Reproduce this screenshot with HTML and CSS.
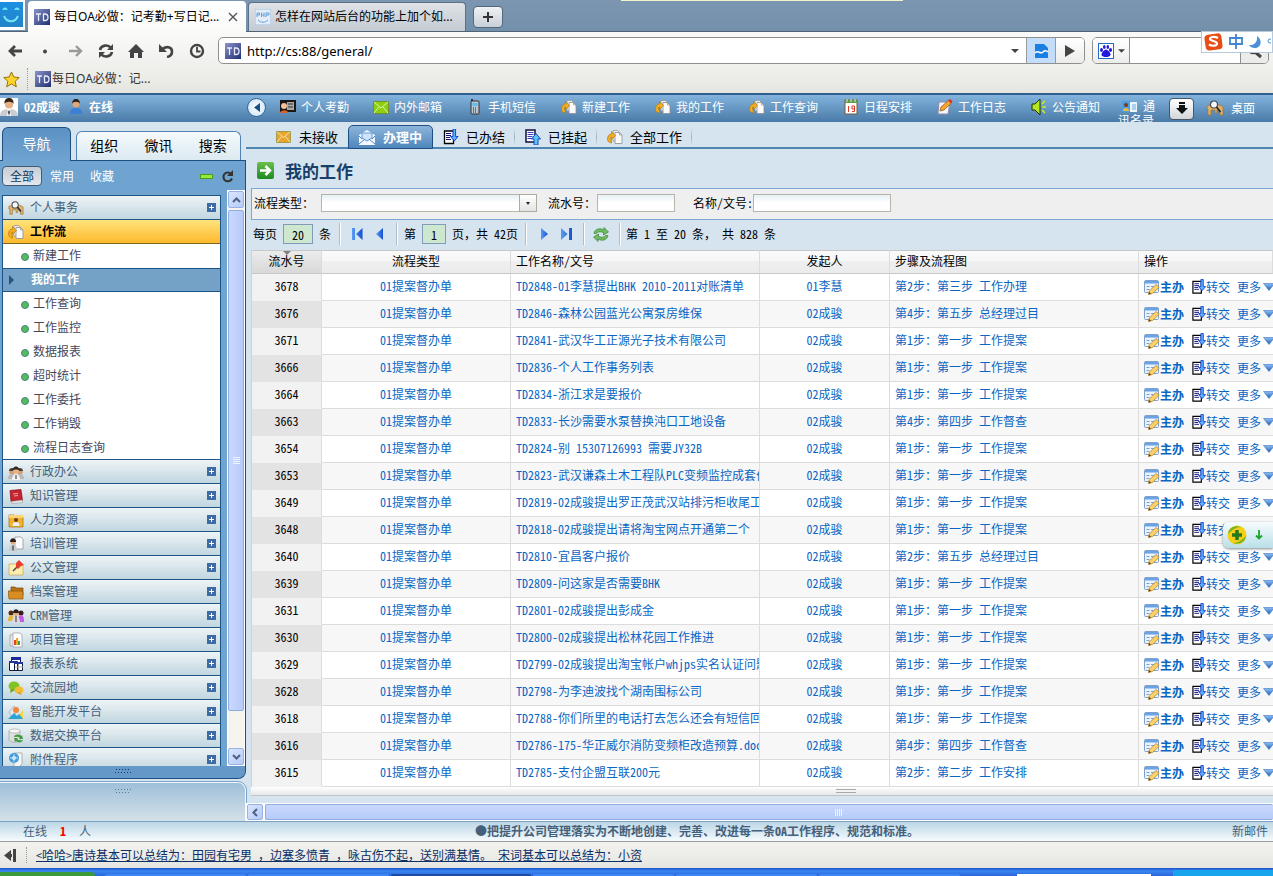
FILE: index.html
```html
<!DOCTYPE html>
<html lang="zh-CN">
<head>
<meta charset="utf-8">
<title>每日OA必做：记考勤+写日记</title>
<link rel="stylesheet" href="styles.css">
</head>
<body>
<svg class="defs" aria-hidden="true">
  <defs>
    <linearGradient id="gb" x1="0" x2="1"><stop offset="0" stop-color="#5b9cf5"/><stop offset="1" stop-color="#1550d0"/></linearGradient>
    <linearGradient id="gtri" x1="0" y1="0" x2="0" y2="1"><stop offset="0" stop-color="#8fc0f5"/><stop offset="1" stop-color="#1c5cb8"/></linearGradient>
    <linearGradient id="gtd" x1="0" y1="0" x2="1" y2="1"><stop offset="0" stop-color="#8b93c8"/><stop offset="1" stop-color="#1f2f72"/></linearGradient>
    <linearGradient id="ggreen" x1="0" y1="0" x2="0" y2="1"><stop offset="0" stop-color="#6cc04a"/><stop offset="1" stop-color="#1d8a22"/></linearGradient>
    <symbol id="i-form" viewBox="0 0 16 16"><rect x=".5" y="1.500" width="14" height="12" rx="1" fill="#eaf3fc" stroke="#7fa0c8"/><path d="M1 2h13v2.500H1z" fill="#6aa2e6"/><path d="M2.500 7.500h3M7 7.500h4M2.500 10.500h3" stroke="#7f9fc8"/><path d="M4.500 15.500l.7-3.500L12 5.500l3.200 2.700L8.500 14.500z" fill="#fbd16a" stroke="#b8862e" stroke-width=".8"/><path d="M4.500 15.500l.6-2.500 2 1.800z" fill="#5c3c14"/></symbol>
    <symbol id="i-turn" viewBox="0 0 15 16"><path d="M1 2h9v12.500H1z" fill="#fff" stroke="#000" stroke-width="1.300"/><path d="M2.500 4.500h5M2.500 6.500h5M2.500 8.500h4M2.500 10.500h5" stroke="#10107c"/><path d="M9.500 0h2.600v7.500h2.500L10.800 12 7 7.500h2.500z" fill="#58b4ff" stroke="#1238d0" stroke-width=".9"/></symbol>
    <symbol id="i-up" viewBox="0 0 16 16"><path d="M1 1h9v12H1z" fill="#fff" stroke="#101040" stroke-width="1.500"/><path d="M2.500 3.500h6M2.500 5.500h6M2.500 7.500h5M2.500 9.500h5" stroke="#3e3ec0"/><path d="M9 16h4v-6h2.500L11 4.500 6.500 10H9z" fill="#58c4ff" stroke="#1238b0" stroke-width=".9"/></symbol>
    <symbol id="i-tri" viewBox="0 0 12 8"><path d="M.5.5h11L6 7.500z" fill="url(#gtri)" stroke="#3d74c0" stroke-width=".6"/></symbol>
    <symbol id="i-flow" viewBox="0 0 16 16"><path d="M6 1.500h4.500l2 2V12H6z" fill="#eee" stroke="#999" stroke-width=".8"/><path d="M8 3.500h4.500l2.500 2.500v8.500H8z" fill="#fafafa" stroke="#8d8d8d" stroke-width=".8"/><path d="M12.500 3.500V6H15" fill="none" stroke="#8d8d8d" stroke-width=".7"/><path d="M.5 10.500C.5 7 2 5 4.500 5V2.500l4 4-4 4V8C3 8 3 10 4.500 12v2C2 13.500.5 12.500.5 10.500z" fill="#f2ae22" stroke="#b67a0c" stroke-width=".7"/></symbol>
    <symbol id="i-desk" viewBox="0 0 18 16"><path d="M1 6l4-1h9l3 2v8h-3v-5h-3v3H9v-3H5v5H2V9H1z" fill="#deb36c" stroke="#9e7130" stroke-width=".7"/><circle cx="8" cy="4.500" r="3.500" fill="#f7fbff" stroke="#4c4c50" stroke-width="1.200"/><path d="M10.500 7l4 5" stroke="#2c2c2c" stroke-width="1.800"/></symbol>
    <symbol id="i-person" viewBox="0 0 18 18"><path d="M0 18c0-5 3-7 9-7s9 2 9 7z" fill="#c9cdd2"/><path d="M7 11h4l-1 2 1 5H7l1-5z" fill="#fff"/><path d="M9 12l1 2-1 4-1-4z" fill="#333"/><circle cx="9" cy="6.500" r="4" fill="#e5b184"/><path d="M4.500 6C4 1 7 0 9 0s5 1 4.500 6c-1-3-8-3-9 0z" fill="#332417"/></symbol>
    <symbol id="i-bluep" viewBox="0 0 14 16"><path d="M1 15c0-4 2-6 6-6s6 2 6 6z" fill="#3b7fd6"/><circle cx="7" cy="5" r="3.500" fill="#dfa777"/><path d="M3 5c0-7 8-7 8 0-1-3-7-3-8 0z" fill="#292018"/></symbol>
    <symbol id="i-team" viewBox="0 0 16 16"><circle cx="4" cy="8" r="2.800" fill="#d29e72"/><circle cx="12" cy="8" r="2.800" fill="#d29e72"/><path d="M0 15c0-4 2-5 4-5s4 1 4 5zM8 15c0-4 2-5 4-5s4 1 4 5z" fill="#bababa"/><path d="M1 7c0-4 6-4 6 0zM9 7c0-4 6-4 6 0z" fill="#4a3e36"/><path d="M4 16c0-4 2-6 4-6s4 2 4 6z" fill="#f1f1f1"/><circle cx="8" cy="7" r="3" fill="#e8b586"/><path d="M4.500 7c0-6 7-6 7 0-1-2-6-2-7 0z" fill="#2d251f"/><path d="M8 11v4" stroke="#333"/></symbol>
    <symbol id="i-book" viewBox="0 0 16 16"><path d="M2 2.500l11-1 1.500 11-11.500 1z" fill="#c52430" stroke="#7f1018" stroke-width=".7"/><path d="M3 13.500L14.500 12v2.500L4 15.500z" fill="#eee" stroke="#888" stroke-width=".5"/><path d="M5 6l5-.5M6 8l4-.5" stroke="#f3a1a1"/></symbol>
    <symbol id="i-hr" viewBox="0 0 16 16"><path d="M1 3h5l1 2h8v10H1z" fill="#f3b22e" stroke="#a56f0a" stroke-width=".7"/><path d="M1 3h14v3H1z" fill="#fbd574"/><circle cx="8" cy="8" r="2" fill="#6b3c18"/><path d="M4.500 14c0-3 1-4 3.500-4s3.500 1 3.500 4z" fill="#eee"/></symbol>
    <symbol id="i-train" viewBox="0 0 16 16"><path d="M7 1h6l2 2v10H7z" fill="#fbfbfb" stroke="#8b8b8b" stroke-width=".7"/><circle cx="5" cy="6" r="2.500" fill="#e1ad80"/><path d="M2 6c0-5 6-5 6 0z" fill="#2c211a"/><path d="M1 15c0-5 1-6 4-6s4 1 4 6z" fill="#c9cbcf"/><path d="M5 9.500v5" stroke="#222"/></symbol>
    <symbol id="i-pin" viewBox="0 0 16 16"><path d="M1 4h14v11H1z" fill="#fdeeae" stroke="#c6a65a" stroke-width=".7"/><path d="M5 11l4-4" stroke="#444" stroke-width="1.500"/><path d="M8 3l3-3 5 5-3 1-3 3-2-2z" fill="#e7402c"/></symbol>
    <symbol id="i-box" viewBox="0 0 16 16"><path d="M3 3h4l1 1h7v7H3z" fill="#b87416" stroke="#774606" stroke-width=".7"/><path d="M0 7h14l1 2v6H1z" fill="#d98c22" stroke="#8b530a" stroke-width=".7"/></symbol>
    <symbol id="i-crm" viewBox="0 0 16 16"><circle cx="3" cy="5" r="2.500" fill="#4c2c18"/><circle cx="13" cy="5" r="2.500" fill="#3a1c1c"/><path d="M0 13c0-5 2-6 3-6s3 1 3 6z" fill="#eab53b"/><path d="M10 14c0-5 1-7 3-7s3 2 3 7z" fill="#c35ae0"/><circle cx="8" cy="5" r="3" fill="#e0ad82"/><path d="M5 5c0-5 6-5 6 0z" fill="#272020"/><path d="M4 15c0-5 2-7 4-7s4 2 4 7z" fill="#d9dce2"/><path d="M8 8v6" stroke="#333"/></symbol>
    <symbol id="i-proj" viewBox="0 0 16 16"><path d="M2 3h8v11H2z" fill="#e8e8e8" stroke="#999" stroke-width=".7"/><path d="M5 1h7l2 2v12H5z" fill="#fff" stroke="#999" stroke-width=".7"/><path d="M6 8h2v5H6z" fill="#e1482a"/><path d="M8 6h2v7H8z" fill="#f6a623"/><path d="M10 9h2v4h-2z" fill="#3ba244"/></symbol>
    <symbol id="i-report" viewBox="0 0 16 16"><path d="M3.500 1.500h9v9h-9z" fill="#fff" stroke="#111a60"/><path d="M3 1h10v3H3z" fill="#1a2a9c"/><path d="M1.500 5.500h8v9h-8zM6.500 6.500h8v8h-8z" fill="#fff" stroke="#111a40"/><path d="M6 6h9v2H6zM1 5h8v2H1z" fill="#24349a"/><path d="M10.500 8v6M7 11h8" stroke="#aaa"/></symbol>
    <symbol id="i-chat" viewBox="0 0 16 16"><ellipse cx="6" cy="6" rx="5.500" ry="4.500" fill="#7fc326"/><path d="M3 9l-1 4 5-3z" fill="#64a818"/><ellipse cx="11" cy="10" rx="4.500" ry="3.500" fill="#f2bd36"/><path d="M12 12l2 3-5-2z" fill="#d99a19"/></symbol>
    <symbol id="i-dev" viewBox="0 0 16 16"><path d="M1 8L6 2l4 5-6 6z" fill="#e8e8e8" stroke="#999" stroke-width=".6"/><circle cx="8" cy="6" r="3" fill="#f0873c"/><path d="M8 15l7-9v9z" fill="#f5d637"/><path d="M0 15l6-6 3 3 2-2 4 5z" fill="#2ba4d8"/></symbol>
    <symbol id="i-data" viewBox="0 0 16 16"><path d="M1 3v9c0 3 11 3 11 0V3z" fill="#dedede" stroke="#999" stroke-width=".6"/><ellipse cx="6.500" cy="3" rx="5.500" ry="2" fill="#fafafa" stroke="#999" stroke-width=".6"/><path d="M6 9c1-3 5-3 7-1l1-1 1 4h-4l1-1c-2-2-4-1-6-1zM15 12c-1 3-5 3-7 1l-1 1-1-4h4l-1 1c2 2 4 1 6 1z" fill="#3f9f3f"/></symbol>
    <symbol id="i-att" viewBox="0 0 16 16"><path d="M6 1h8v11l-3 3H6z" fill="#f5f5f5" stroke="#9a9a9a" stroke-width=".7"/><circle cx="6" cy="6" r="5" fill="#429bdc"/><circle cx="6" cy="6" r="2" fill="#eaf6ff"/><path d="M2 6h8M6 2v8" stroke="#bfe0f7"/></symbol>
    <symbol id="i-mail" viewBox="0 0 16 13"><path d="M.5.500h15v12H.5z" fill="currentColor" stroke="#6c7a10" stroke-opacity=".6"/><path d="M1 1l7 6 7-6M1 12l5-6M15 12l-5-6" stroke="#fff" stroke-opacity=".7" fill="none"/></symbol>
    <symbol id="i-td" viewBox="0 0 16 16"><rect width="16" height="16" fill="url(#gtd)"/><path d="M2 5h5M4.500 5v7M9.500 5v6.500M9 5h2c4 0 4 6.500 0 6.500H9" fill="none" stroke="#e9ebf8" stroke-width="1.300"/></symbol>
  </defs>
</svg>

<header class="browser">
  <div class="tabbar">
    <span class="hint-strip"></span>
    <div class="logo"><svg width="25" height="25" viewBox="0 0 25 25"><path d="M3.500 8c0-2 3-2 3 0M15.500 8c0-2 3-2 3 0M4 14c3 7 11 7 14 0" fill="none" stroke="#6fe4f8" stroke-width="2"/></svg></div>
    <div class="tab tab-on"><svg width="16" height="16"><use href="#i-td"/></svg><span class="tab-text">每日OA必做：记考勤+写日记...</span><button class="close" aria-label="关闭"><svg width="10" height="10" viewBox="0 0 10 10"><path d="M1 1l8 8M9 1L1 9" stroke="#555" stroke-width="1.400"/></svg></button></div>
    <div class="tab tab-off"><svg width="16" height="16" viewBox="0 0 16 16"><rect width="16" height="16" fill="#e3edf8" stroke="#9dbddd"/><path d="M2 8V4h2.500v2H2M6.500 3.500V8M9 3.500V8M6.500 6H9M11 8V4h3v2h-3M3 11c3 3 7 3 10 0" fill="none" stroke="#64a0da"/></svg><span class="tab-text">怎样在网站后台的功能上加个如...</span></div>
    <button class="newtab" aria-label="新标签"><svg width="12" height="12" viewBox="0 0 12 12"><path d="M6 1v10M1 6h10" stroke="#333" stroke-width="2"/></svg></button>
  </div>
  <div class="navbar">
    <div class="navicons">
      <button aria-label="后退"><svg width="14" height="14" viewBox="0 0 14 14"><path d="M14 7H3M7 2L2 7l5 5" fill="none" stroke="#444" stroke-width="2.800"/></svg></button>
      <button aria-label="历史"><svg width="14" height="14" viewBox="0 0 14 14"><circle cx="7" cy="7.500" r="2" fill="#444"/></svg></button>
      <button aria-label="前进"><svg width="14" height="14" viewBox="0 0 14 14"><path d="M0 7h11M7 2l5 5-5 5" fill="none" stroke="#999" stroke-width="2.400"/></svg></button>
      <button aria-label="刷新"><svg width="16" height="14" viewBox="0 0 16 14"><path d="M2 6c1-5 8-6 11-2M14 8c-1 5-8 6-11 2" fill="none" stroke="#444" stroke-width="2.600"/><path d="M15 0v6H9zM1 14V8h6z" fill="#444"/></svg></button>
      <button aria-label="主页"><svg width="16" height="14" viewBox="0 0 16 14"><path d="M8 0l8 8h-2v6h-4V9H6v5H2V8H0z" fill="#444"/></svg></button>
      <button aria-label="恢复"><svg width="15" height="14" viewBox="0 0 15 14"><path d="M3 5.500C7 1.500 13 3 13 7.500c0 3-2 5-5 5.500" fill="none" stroke="#444" stroke-width="2.600"/><path d="M0 0v8h8z" fill="#444"/></svg></button>
      <button aria-label="时间"><svg width="16" height="16" viewBox="0 0 16 16"><circle cx="8" cy="8" r="6" fill="none" stroke="#444" stroke-width="2.400"/><path d="M8 4v4.500h3.500" fill="none" stroke="#444" stroke-width="1.800"/></svg></button>
    </div>
    <div class="address">
      <svg width="16" height="16"><use href="#i-td"/></svg>
      <input class="url" aria-label="地址" value="http://cs:88/general/">
      <button class="drop" aria-label="下拉"><svg width="8" height="4" viewBox="0 0 8 4"><path d="M0 0h8L4 4z" fill="#444"/></svg></button>
      <button class="mode" aria-label="模式"><svg width="13" height="14" viewBox="0 0 13 14"><path d="M0 0h9l4 4v10H0z" fill="#1a7fe0"/><path d="M0 9c3-4 5 2 8-1 2-2 4-1 5 0" fill="none" stroke="#fff" stroke-width="1.500"/></svg></button>
      <button class="go" aria-label="转到"><svg width="10" height="12" viewBox="0 0 10 12"><path d="M0 0l10 6-10 6z" fill="#444"/></svg></button>
    </div>
    <div class="search">
      <button class="engine" aria-label="搜索引擎"><svg width="16" height="16" viewBox="0 0 16 16"><rect x=".5" y=".5" width="15" height="15" fill="#fff" stroke="#1f6ec4"/><ellipse cx="3.500" cy="7" rx="1.500" ry="2" fill="#2319dc"/><ellipse cx="6.300" cy="4" rx="1.300" ry="2" fill="#2319dc"/><ellipse cx="9.800" cy="4" rx="1.300" ry="2" fill="#2319dc"/><ellipse cx="12.500" cy="7" rx="1.500" ry="2" fill="#2319dc"/><path d="M8 6.500c2 0 5 4 4.500 5.500s-2.500 2-4.500 2-4-.5-4.500-2 2.500-5.500 4.500-5.500z" fill="#2319dc"/></svg><svg width="7" height="4" viewBox="0 0 8 4"><path d="M0 0h8L4 4z" fill="#444"/></svg></button>
      <input class="query" aria-label="搜索">
      <button class="find" aria-label="查找"><svg width="16" height="16" viewBox="0 0 16 16"><circle cx="6" cy="6" r="4" fill="none" stroke="#444" stroke-width="2.500"/><path d="M8 9l6 5" stroke="#444" stroke-width="3"/></svg></button>
    </div>
    <div class="ime">
      <svg width="19" height="18" viewBox="0 0 19 18"><rect x="1" y="1" width="17" height="16" rx="4" fill="#e94d16" transform="rotate(-8 9 9)"/><path d="M14 5c-4-2-8-1-8 1s7 2 7 4.500-5 3-8 1" fill="none" stroke="#fff" stroke-width="2.200"/></svg>
      <svg width="14" height="16" viewBox="0 0 14 16"><path d="M1 4h12v6H1zM7 0v15" fill="none" stroke="#3f86cf" stroke-width="1.800"/></svg>
      <svg width="12" height="13" viewBox="0 0 12 13"><path d="M8 0c6 4 4 12-2 12-3 0-5-1-6-3 5 1 9-3 8-9z" fill="#4a8fd6"/></svg>
      <svg width="4" height="8" viewBox="0 0 4 8"><circle cx="3" cy="3" r="2" fill="none" stroke="#4a8fd6"/></svg>
    </div>
  </div>
  <div class="bookmarks">
    <svg width="17" height="17" viewBox="0 0 17 17"><path d="M8.500 1l2.300 5 5.400.6-4 3.700 1.100 5.500-4.800-2.800-4.800 2.800 1.100-5.500-4-3.700 5.400-.6z" fill="#fbd52c" stroke="#9c7208"/></svg>
    <a class="bookmark" href="#"><svg width="16" height="16"><use href="#i-td"/></svg>每日OA必做：记...</a>
  </div>
</header>

<nav class="oabar">
  <div class="who"><span class="avatar"><svg width="18" height="18"><use href="#i-person"/></svg></span><b>02成骏</b><svg width="14" height="16"><use href="#i-bluep"/></svg><b>在线</b></div>
  <div class="quick">
    <button class="round" aria-label="收起"><svg width="6" height="9" viewBox="0 0 6 9"><path d="M6 0v9L0 4.500z" fill="#1a4f86"/></svg></button>
    <a href="#"><svg width="17" height="14" viewBox="0 0 17 14"><rect x="1" y="0" width="16" height="12" fill="#1b1715"/><path d="M8 2h7v8H8z" fill="#aaa"/><path d="M9 4h5M9 7h5" stroke="#333"/><circle cx="5" cy="6" r="3" fill="#f2c09a"/><path d="M1 13c0-3 8-4 8 0z" fill="#d8632c"/></svg>个人考勤</a>
    <a href="#"><svg class="lime" width="16" height="13"><use href="#i-mail"/></svg>内外邮箱</a>
    <a href="#"><svg width="16" height="16" viewBox="0 0 16 16"><path d="M5 0v3" stroke="#333" stroke-width="2"/><rect x="4" y="2" width="8" height="13" rx="1" fill="#b9c6d2" stroke="#333"/><path d="M5.500 4h5v3h-5z" fill="#57c2ee"/><path d="M6 9h4M6 11h4M6 13h4" stroke="#222" stroke-dasharray="1 1"/></svg>手机短信</a>
    <a href="#"><svg width="16" height="16"><use href="#i-flow"/></svg>新建工作</a>
    <a href="#"><svg width="16" height="16"><use href="#i-flow"/></svg>我的工作</a>
    <a href="#"><svg width="16" height="16"><use href="#i-flow"/></svg>工作查询</a>
    <a href="#"><svg width="16" height="16" viewBox="0 0 16 16"><rect x="2" y="1" width="12" height="14" fill="#fff" stroke="#7b5a3a"/><path d="M2 1h12v3H2z" fill="#5a9c44"/><path d="M4 0v3M8 0v3M12 0v3" stroke="#e8e8e8"/><path d="M5.500 7v6M9 10V7h2.500v5.500H9M9 10h3" fill="none" stroke="#df3a2c"/></svg>日程安排</a>
    <a href="#"><svg width="16" height="16" viewBox="0 0 16 16"><path d="M2 3h11l-2 12H1z" fill="#f6f6ff" stroke="#8c8ca8"/><path d="M3 12l1-4 8-7 2.500 3L7 11z" fill="#f5a62d" stroke="#8c4c12" stroke-width=".7"/><path d="M11 1.500L13 0l2.500 2.500-1.500 2z" fill="#d93324"/></svg>工作日志</a>
    <a href="#"><svg width="16" height="16" viewBox="0 0 16 16"><path d="M1 5h3l5-5v16l-5-5H1z" fill="#b6e61e" stroke="#22330a"/><path d="M11 5l3-3M11 8h4M11 11l3 3" stroke="#c7ec2a" stroke-width="1.500"/></svg>公告通知</a>
    <a href="#" class="wrapped"><svg width="16" height="12" viewBox="0 0 16 12"><path d="M0 0h8v11H0z" fill="#4b9fe6"/><path d="M8 1h7v10H8z" fill="#eaf4fc"/><circle cx="4" cy="4" r="2" fill="#7a3c12"/><path d="M1 10c0-4 6-4 6 0z" fill="#f4b53c"/><path d="M10 4h4M10 6h4M10 8h4" stroke="#6aaee0"/></svg>通讯名录</a>
    <button class="down" aria-label="展开"><svg width="12" height="13" viewBox="0 0 12 13"><path d="M3 0h6v2H3zM3 3h6v3h3l-6 6-6-6h3z" fill="#111"/></svg></button>
    <a href="#" class="desk"><svg width="18" height="16"><use href="#i-desk"/></svg>桌面</a>
  </div>
</nav>

<div class="body">
  <aside class="side">
    <div class="side-tabs">
      <button class="st-on">导航</button>
      <div class="st-group"><button>组织</button><button>微讯</button><button>搜索</button></div>
    </div>
    <div class="side-panel">
      <div class="side-filter"><button class="sf-on">全部</button><button>常用</button><button>收藏</button><span class="grow"></span><span class="bar-green"></span><svg width="12" height="13" viewBox="0 0 12 13"><path d="M9 4C6 1 1 3 1.500 7.500s6.500 5 8.500 1" fill="none" stroke="#333" stroke-width="2"/><path d="M11 0v6H5z" fill="#333"/></svg></div>
      <div class="side-body">
        <ul class="menu">
          <li class="m"><svg width="16" height="16"><use href="#i-desk"/></svg><a href="#">个人事务</a><i class="plus"></i></li>
          <li class="m m-open"><svg width="16" height="16"><use href="#i-flow"/></svg><a href="#">工作流</a><i class="dots"></i></li>
          <li class="s"><a href="#">新建工作</a></li>
          <li class="s s-on"><a href="#">我的工作</a></li>
          <li class="s"><a href="#">工作查询</a></li>
          <li class="s"><a href="#">工作监控</a></li>
          <li class="s"><a href="#">数据报表</a></li>
          <li class="s"><a href="#">超时统计</a></li>
          <li class="s"><a href="#">工作委托</a></li>
          <li class="s"><a href="#">工作销毁</a></li>
          <li class="s"><a href="#">流程日志查询</a></li>
          <li class="m"><svg width="16" height="16"><use href="#i-team"/></svg><a href="#">行政办公</a><i class="plus"></i></li>
          <li class="m"><svg width="16" height="16"><use href="#i-book"/></svg><a href="#">知识管理</a><i class="plus"></i></li>
          <li class="m"><svg width="16" height="16"><use href="#i-hr"/></svg><a href="#">人力资源</a><i class="plus"></i></li>
          <li class="m"><svg width="16" height="16"><use href="#i-train"/></svg><a href="#">培训管理</a><i class="plus"></i></li>
          <li class="m"><svg width="16" height="16"><use href="#i-pin"/></svg><a href="#">公文管理</a><i class="plus"></i></li>
          <li class="m"><svg width="16" height="16"><use href="#i-box"/></svg><a href="#">档案管理</a><i class="plus"></i></li>
          <li class="m"><svg width="16" height="16"><use href="#i-crm"/></svg><a href="#">CRM管理</a><i class="plus"></i></li>
          <li class="m"><svg width="16" height="16"><use href="#i-proj"/></svg><a href="#">项目管理</a><i class="plus"></i></li>
          <li class="m"><svg width="16" height="16"><use href="#i-report"/></svg><a href="#">报表系统</a><i class="plus"></i></li>
          <li class="m"><svg width="16" height="16"><use href="#i-chat"/></svg><a href="#">交流园地</a><i class="plus"></i></li>
          <li class="m"><svg width="16" height="16"><use href="#i-dev"/></svg><a href="#">智能开发平台</a><i class="plus"></i></li>
          <li class="m"><svg width="16" height="16"><use href="#i-data"/></svg><a href="#">数据交换平台</a><i class="plus"></i></li>
          <li class="m"><svg width="16" height="16"><use href="#i-att"/></svg><a href="#">附件程序</a><i class="plus"></i></li>
        </ul>
        <div class="vscroll">
          <span class="sb-btn"><svg width="9" height="6" viewBox="0 0 9 6"><path d="M1 5l3.500-3.500L8 5" fill="none" stroke="#4d6185" stroke-width="2"/></svg></span>
          <span class="sb-thumb"><svg width="7" height="8" viewBox="0 0 7 8"><path d="M0 .5h7M0 2.500h7M0 4.500h7M0 6.500h7" stroke="#eef4fe"/></svg></span>
          <span class="sb-gap"></span>
          <span class="sb-btn"><svg width="9" height="6" viewBox="0 0 9 6"><path d="M1 1l3.500 3.500L8 1" fill="none" stroke="#4d6185" stroke-width="2"/></svg></span>
        </div>
      </div>
      <div class="grip"><svg width="16" height="4" viewBox="0 0 16 4"><path d="M0 3.500h16M1 .5h14" stroke="#173f68" stroke-dasharray="1 2"/></svg></div>
    </div>
    <div class="side-lower"><svg width="16" height="4" viewBox="0 0 16 4"><path d="M0 .5h16M1 3.500h14" stroke="#567b9c" stroke-dasharray="1 2"/></svg></div>
  </aside>

  <main class="content">
    <div class="pane">
      <div class="work-tabs">
        <a href="#"><svg class="gold" width="15" height="12"><use href="#i-mail"/></svg>未接收</a>
        <a href="#" class="wt-on"><svg width="16" height="15" viewBox="0 0 16 15"><path d="M0 5l8-5 8 5v10H0z" fill="#f4f9ff"/><path d="M3 3h10v5l-5 3-5-3z" fill="#cfe4fa" stroke="#5f9ad6"/><path d="M0 14l6-5M16 14l-6-5M0 6l3 3M16 6l-3 3" stroke="#4d86c2"/></svg>办理中</a>
        <a href="#"><svg width="16" height="16"><use href="#i-turn"/></svg>已办结</a>
        <a href="#"><svg width="16" height="16"><use href="#i-up"/></svg>已挂起</a>
        <a href="#"><svg width="16" height="16"><use href="#i-flow"/></svg>全部工作</a>
      </div>
      <h1 class="title"><svg width="17" height="17" viewBox="0 0 17 17"><rect width="17" height="17" rx="2" fill="url(#ggreen)"/><path d="M3 8.500h9M8.500 4l4.500 4.500L8.500 13" fill="none" stroke="#fff" stroke-width="2.500"/></svg>我的工作</h1>
      <form class="filter">
        <label for="f-type">流程类型：</label>
        <span class="combo"><select id="f-type"><option></option></select><i></i></span>
        <label for="f-no" class="l2">流水号：</label><input id="f-no" class="in-no">
        <label for="f-name" class="l3">名称/文号:</label><input id="f-name" class="in-name">
      </form>
      <div class="pager">
        <div class="pg p1"><label for="p-size">每页</label><input id="p-size" class="size" value="20"><span>条</span></div>
        <div class="pg p2"><button aria-label="首页"><svg width="11" height="12" viewBox="0 0 11 12"><path d="M0 0h3v12H0zM10.500 0v12L4 6z" fill="url(#gb)"/></svg></button><button aria-label="上一页"><svg width="7" height="12" viewBox="0 0 7 12"><path d="M7 0v12L0 6z" fill="url(#gb)"/></svg></button></div>
        <div class="pg p3"><label for="p-page">第</label><input id="p-page" class="page" value="1"><span>页，共 42页</span></div>
        <div class="pg p4"><button aria-label="下一页"><svg width="7" height="12" viewBox="0 0 7 12"><path d="M0 0v12l7-6z" fill="url(#gb)"/></svg></button><button aria-label="末页"><svg width="11" height="12" viewBox="0 0 11 12"><path d="M0 0v12l6.500-6zM8 0h3v12H8z" fill="url(#gb)"/></svg></button></div>
        <div class="pg p5"><button aria-label="刷新"><svg width="16" height="15" viewBox="0 0 16 15"><path d="M1 6.500C1.500 2 7 .500 11 3V.500l4.500 4.500-5 3V5.500C7 4 4 5 3.500 6.500zM15 8.500C14.500 13 9 14.500 5 12v2.500L.5 10l5-3v2.500c3.500 1.500 6.500.500 7-1z" fill="#6fbd5f" stroke="#3a8236" stroke-width=".7"/></svg></button></div>
        <span class="sum">第 1 至 20 条， 共 828 条</span>
      </div>
      <table class="grid">
        <colgroup><col class="c1"><col class="c2"><col class="c3"><col class="c4"><col class="c5"><col></colgroup>
        <thead><tr><th class="sorted">流水号</th><th class="mid">流程类型</th><th>工作名称/文号</th><th class="mid">发起人</th><th>步骤及流程图</th><th>操作</th></tr></thead>
        <tbody id="rows"></tbody>
      </table>
      <div class="splitter"><i></i></div>
    </div>
    <div class="hscroll">
      <span class="sb-btn"><svg width="6" height="9" viewBox="0 0 6 9"><path d="M5 1L1.500 4.500 5 8" fill="none" stroke="#4d6185" stroke-width="2"/></svg></span>
      <span class="sb-thumb"><svg width="8" height="7" viewBox="0 0 8 7"><path d="M.5 0v7M2.500 0v7M4.500 0v7M6.500 0v7" stroke="#eef4fe"/></svg></span>
    </div>
  </main>
  <div class="floater">
    <svg width="20" height="20" viewBox="0 0 20 20"><circle cx="10" cy="10" r="9.500" fill="#f6cf16"/><path d="M1 9C2 2 9 0 14 2 9 2 5 5 1 9zM19 11c-1 7-8 9-13 7 5 0 9-3 13-7z" fill="#72b32a"/><path d="M10 5v10M5 10h10" stroke="#267a1e" stroke-width="3.500"/></svg>
    <svg width="8" height="10" viewBox="0 0 8 10"><path d="M4 0v8M1 5.500l3 3 3-3" fill="none" stroke="#1fa32c" stroke-width="1.800"/></svg>
  </div>
</div>

<footer class="foot">
  <div class="status"><span class="online">在线<b>1</b>人</span><strong>●把提升公司管理落实为不断地创建、完善、改进每一条OA工作程序、规范和标准。</strong><span class="newmail">新邮件</span></div>
  <div class="ticker"><svg width="12" height="13" viewBox="0 0 12 13"><path d="M0 6.500L7 1v4h1v3H7v4zM9 0h3v13H9z" fill="#444"/></svg><a href="#">&lt;哈哈&gt;唐诗基本可以总结为：田园有宅男 ，边塞多愤青 ，咏古伤不起，送别满基情。 宋词基本可以总结为：小资</a></div>
  <div class="taskbar"><span class="start"></span><span class="task"></span><span class="task"></span><span class="task task-on"></span><span class="task"></span><span class="task"></span><span class="task"></span><span class="lang"></span><span class="tray"></span></div>
</footer>
<script src="app.js"></script>
</body>
</html>
```

FILE: app.js
```js
const rows = [
  ["3678", "TD2848-01李慧提出BHK 2010-2011对账清单", "01李慧", "第2步：第三步 工作办理"],
  ["3676", "TD2846-森林公园蓝光公寓泵房维保", "02成骏", "第4步：第五步 总经理过目"],
  ["3671", "TD2841-武汉华工正源光子技术有限公司", "02成骏", "第1步：第一步 工作提案"],
  ["3666", "TD2836-个人工作事务列表", "02成骏", "第1步：第一步 工作提案"],
  ["3664", "TD2834-浙江求是要报价", "02成骏", "第1步：第一步 工作提案"],
  ["3663", "TD2833-长沙需要水泵替换沌口工地设备", "02成骏", "第4步：第四步 工作督查"],
  ["3654", "TD2824-别 15307126993 需要JY32B", "02成骏", "第1步：第一步 工作提案"],
  ["3653", "TD2823-武汉谦森土木工程队PLC变频监控成套价", "02成骏", "第1步：第一步 工作提案"],
  ["3649", "TD2819-02成骏提出罗正茂武汉站排污柜收尾工", "02成骏", "第1步：第一步 工作提案"],
  ["3648", "TD2818-02成骏提出请将淘宝网点开通第二个", "02成骏", "第1步：第一步 工作提案"],
  ["3640", "TD2810-宜昌客户报价", "02成骏", "第2步：第五步 总经理过目"],
  ["3639", "TD2809-问这家是否需要BHK", "02成骏", "第1步：第一步 工作提案"],
  ["3631", "TD2801-02成骏提出彭成金", "02成骏", "第1步：第一步 工作提案"],
  ["3630", "TD2800-02成骏提出松林花园工作推进", "02成骏", "第1步：第一步 工作提案"],
  ["3629", "TD2799-02成骏提出淘宝帐户whjps实名认证问题", "02成骏", "第1步：第一步 工作提案"],
  ["3628", "TD2798-为李迪波找个湖南围标公司", "02成骏", "第1步：第一步 工作提案"],
  ["3618", "TD2788-你们所里的电话打去怎么还会有短信回", "02成骏", "第1步：第一步 工作提案"],
  ["3616", "TD2786-175-华正威尔消防变频柜改造预算.doc", "02成骏", "第4步：第四步 工作督查"],
  ["3615", "TD2785-支付企盟互联200元", "02成骏", "第2步：第二步 工作安排"]
];

const icon = (id, w, h) => `<svg width="${w}" height="${h}"><use href="#${id}"/></svg>`;

document.getElementById("rows").innerHTML = rows.map(([no, name, who, step]) => `
  <tr>
    <td class="no">${no}</td>
    <td class="mid"><a href="#">01提案督办单</a></td>
    <td><a href="#">${name}</a></td>
    <td class="mid"><a href="#">${who}</a></td>
    <td><a href="#">${step}</a></td>
    <td class="ops"><div class="ops-row"><a href="#" class="host">${icon("i-form", 16, 16)}主办</a><a href="#" class="turn">${icon("i-turn", 14, 16)}转交</a><a href="#" class="more">更多${icon("i-tri", 12, 8)}</a></div></td>
  </tr>`).join("");
```

FILE: styles.css
```css
* { box-sizing: border-box; }
html, body { height: 100%; }
body {
  margin: 0; display: flex; flex-direction: column; overflow: hidden;
  font: 12px/16px "Noto Sans Mono CJK SC", "Liberation Serif", "Noto Sans CJK SC", sans-serif;
  color: #000; background: #d6e4ef;
}
a { color: inherit; text-decoration: none; }
button { font: inherit; color: inherit; border: 0; background: none; padding: 0; margin: 0; display: flex; align-items: center; justify-content: center; }
input, select { font: inherit; border: 0; margin: 0; padding: 0; min-width: 0; background: #fff; border-radius: 0; }
svg { flex: none; display: block; }
.defs { position: absolute; width: 0; height: 0; }
.grow { flex: 1; }

/* browser chrome */
.browser { flex: none; font-family: "Noto Sans", "Noto Sans CJK SC", sans-serif; }
.tabbar { position: relative; height: 32px; display: flex; align-items: flex-end; background: linear-gradient(#7c96b1, #7390ab); border-bottom: 1px solid #4f6379; }
.hint-strip { position: absolute; top: 0; left: 621px; width: 282px; height: 1px; background: #f4f2c8; }
.logo { align-self: flex-start; width: 25px; height: 30px; border: solid #fff; border-width: 2px 2px 3px 0; background: linear-gradient(#1d8fe0, #2384c8); margin-right: 3px; overflow: hidden; }
.tab { display: flex; align-items: center; gap: 4px; width: 218px; padding: 0 8px 0 6px; border-radius: 4px 4px 0 0; margin-right: 2px; }
.tab-on { height: 31px; margin-bottom: -1px; background: linear-gradient(#fff, #fafaf9); }
.tab-off { height: 29px; background: linear-gradient(#dfe3e8, #c3cad2); border: 1px solid #5c7086; border-bottom: 0; }
.tab-text { flex: 1; white-space: nowrap; overflow: hidden; }
.newtab { width: 30px; height: 22px; margin: 0 0 3px 5px; border: 1px solid #53677c; border-radius: 4px; background: linear-gradient(#f0f2f4, #c8cfd7); }
.navbar { position: relative; height: 35px; padding: 5px 4px 3px 7px; display: flex; gap: 7px; background: linear-gradient(#fafaf9, #efefec); }
.navicons { display: flex; align-items: center; justify-content: space-between; width: 204px; padding-right: 6px; }
.navicons button { width: 16px; }
.address { flex: 1; display: flex; align-items: center; padding-left: 6px; border: 1px solid #8f8f8f; border-radius: 5px; background: #fff; overflow: hidden; }
.url { flex: 1; height: 24px; padding-left: 6px; font: 13px/24px "Noto Sans", sans-serif; }
.drop { width: 22px; height: 100%; }
.mode { width: 30px; height: 100%; background: #c3ddfa; border: solid #9a9a9a; border-width: 0 1px; }
.go { width: 28px; height: 100%; background: linear-gradient(#fff, #ececea); }
.search { width: 177px; display: flex; border: 1px solid #8f8f8f; border-radius: 5px; overflow: hidden; background: #fff; }
.engine { width: 37px; gap: 4px; border-right: 1px solid #8f8f8f; background: linear-gradient(#fff, #ececea); }
.query { flex: 1; }
.find { width: 28px; border-left: 1px solid #8f8f8f; background: #ececea; }
.ime { position: absolute; right: 0; top: -1px; width: 72px; height: 22px; padding-left: 2px; display: flex; align-items: center; gap: 6px; border: 1px solid #b7c9dc; background: #fff; overflow: hidden; }
.bookmarks { height: 26px; padding: 0 3px 2px; display: flex; align-items: center; gap: 7px; background: linear-gradient(#efefec, #e6e6e1); color: #333; }
.bookmark { display: flex; align-items: center; gap: 1px; height: 22px; padding-left: 7px; border-left: 1px dotted #999; }

/* application bar */
.oabar { flex: none; height: 29px; display: flex; overflow: hidden; color: #fff; background: linear-gradient(#82b4de, #4a7aa7); border-top: 2px solid #315f8d; }
.who { width: 247px; flex: none; display: flex; align-items: center; gap: 6px; padding-bottom: 4px; }
.who b { padding-right: 3px; }
.avatar { background: #fff; }
.quick { flex: 1; min-width: 0; display: flex; align-items: center; overflow: hidden; }
.quick a { flex: none; width: 94px; display: flex; align-items: center; gap: 5px; padding-bottom: 3px; white-space: nowrap; }
.round { flex: none; width: 19px; height: 19px; margin: 0 13px 2px 0; border-radius: 50%; background: radial-gradient(#fff, #c6dff4); border: 1px solid #336699; }
.lime { color: #8ed00c; }
.quick .wrapped { display: block; width: 42px; height: 27px; padding: 4px 0 0; margin: 0 12px 0 -10px; white-space: normal; text-align: center; word-break: break-all; line-height: 14px; }
.wrapped svg { display: inline-block; vertical-align: -2px; margin: 0 5px; }
.down { flex: none; width: 25px; height: 22px; margin-right: 12px; border: 1px solid #4a5664; border-radius: 4px; background: linear-gradient(#fff, #d2d6da); }
.quick .desk { width: 60px; gap: 7px; padding-bottom: 1px; }

/* sidebar */
.body { position: relative; flex: 1; min-height: 0; display: flex; }
.side { flex: none; width: 246px; display: flex; flex-direction: column; }
.side-tabs { flex: none; height: 39px; padding: 6px 5px 0 2px; display: flex; align-items: flex-end; gap: 5px; font-size: 14px; position: relative; z-index: 1; margin-bottom: -1px; }
.st-on { width: 69px; height: 34px; padding-bottom: 4px; color: #fff; border: 1px solid #1d4f80; border-bottom: 0; border-radius: 6px 6px 0 0; background: linear-gradient(#5c92c4, #6fa3d0); }
.st-group { flex: 1; height: 29px; margin-bottom: 1px; padding-bottom: 2px; display: flex; border: 1px solid #4f83b3; border-bottom: 0; border-radius: 6px 6px 0 0; background: linear-gradient(#f5fafc, #dbeaf1); }
.st-group button { flex: 1; }
.side-panel { flex: 1; min-height: 0; display: flex; flex-direction: column; background: #6fa3d0; border: solid #1d4f80; border-width: 1px 1px 1px 0; border-radius: 0 0 8px 0; }
.side-filter { flex: none; height: 29px; display: flex; align-items: center; padding: 1px 11px 0 2px; color: #fff; }
.side-filter button { width: 40px; height: 20px; border-radius: 4px; }
.side-filter .sf-on { color: #0d3862; border: 1px solid #445b74; background: linear-gradient(#c4ccd5, #e2e8ee); }
.bar-green { width: 13px; height: 5px; margin-right: 9px; background: #9be83b; border: 1px solid #46a01c; }
.side-body { flex: 1; min-height: 0; display: flex; }
.menu { flex: 1; margin: 5px 6px 0 2px; padding: 0; list-style: none; border: 1px solid #1c5689; border-bottom: 0; overflow: hidden; background: #fff; }
.m, .s { height: 24px; display: flex; align-items: center; }
.m { padding: 0 4px 0 5px; gap: 6px; color: #45607a; border-bottom: 1px solid #1c5689; background: linear-gradient(#eef4f6, #c1d6df); }
.m a { flex: 1; padding-bottom: 2px; }
.m-open { color: #000; font-weight: bold; background: linear-gradient(#ffe37c, #fdb92c); border-bottom-color: #7c6a18; }
.plus { width: 9px; height: 9px; background: linear-gradient(#fff, #fff) center/5px 1px no-repeat, linear-gradient(#fff, #fff) center/1px 5px no-repeat, #3c6ca3; }
.dots { width: 8px; height: 10px; background: radial-gradient(#fff6c0 40%, transparent 50%) 0 0/2px 2px; clip-path: polygon(0 0, 100% 50%, 0 100%); }
.s { padding: 0 0 2px 18px; color: #44475c; }
.s::before { content: ""; width: 6px; height: 6px; margin: 4px 4px 0 0; border-radius: 50%; background: #5cb85c; border: 1px solid #3c8a84; }
.s-on { color: #fff; font-weight: bold; padding-left: 6px; background: #74a2c6; border: solid #1c5689; border-width: 1px 0; }
.s-on::before { width: 0; height: 0; margin: 2px 17px 0 0; border: solid transparent; border-width: 5px 0 5px 5px; border-left-color: #245582; border-radius: 0; background: none; }
.s:nth-child(11) { border-bottom: 1px solid #1c5689; }
.vscroll { flex: none; width: 18px; display: flex; flex-direction: column; background: #f6f4ef; border: 1px solid #fff; }
.sb-btn { flex: none; width: 16px; height: 17px; display: flex; align-items: center; justify-content: center; background: linear-gradient(135deg, #dbe5fe, #b4cbf8); border: 1px solid #97b2e6; border-radius: 2px; }
.sb-thumb { flex: 1; margin-top: 2px; display: flex; align-items: center; justify-content: center; background: linear-gradient(90deg, #cad8fd, #b6cbfa); border: 1px solid #8facdf; border-radius: 2px; }
.sb-gap { height: 37px; }
.grip { flex: none; height: 12px; padding-top: 3px; display: flex; justify-content: center; background: #6398c8; border-radius: 0 0 8px 0; }
.side-lower { flex: none; height: 39px; margin-top: 3px; padding-top: 6px; display: flex; justify-content: center; background: linear-gradient(#9fbfd9, #d4e1e9); border: solid #f2f8fb; border-width: 1px 1px 0 0; outline: 1px solid #7aa2c4; border-radius: 0 8px 0 0; }

/* work area */
.content { flex: 1; min-width: 0; display: flex; flex-direction: column; }
.pane { flex: 1; min-height: 0; padding-left: 5px; }
.work-tabs { height: 27px; margin-left: -5px; padding: 3px 0 0 20px; display: flex; font-size: 13px; border-bottom: 2px solid #4f84b3; }
.work-tabs a { display: flex; align-items: center; gap: 7px; height: 24px; padding: 0 10px; margin-bottom: -2px; background: linear-gradient(transparent, #9fb2c2, transparent) right center/1px 18px no-repeat; }
.work-tabs a:first-child { background: none; gap: 8px; }
.work-tabs .wt-on { color: #fff; font-weight: bold; gap: 8px; border: 1px solid #1d4f80; border-radius: 5px 5px 0 0; background: linear-gradient(#8db5da, #4f86bd); }
.gold { color: #e9a62c; }
.title { height: 39px; margin: 0; padding: 4px 0 0 6px; display: flex; align-items: center; gap: 11px; font-size: 17px; line-height: 24px; color: #16406a; }
.filter { height: 32px; display: flex; align-items: center; padding: 0 0 2px 2px; border: 1px solid #7ea8d0; border-right: 0; background: #efefef; white-space: nowrap; }
.filter label { width: 67px; flex: none; }
.filter .l2 { width: 49px; margin-left: 11px; }
.filter .l3 { width: 60px; margin-left: 18px; }
.filter input, .filter select { height: 18px; border: 1px solid #b9b4ab; background: linear-gradient(#e6f0f5, #fff 8px); }
.combo { position: relative; width: 216px; }
.combo select { display: block; width: 100%; appearance: none; }
.combo i { position: absolute; right: 0; top: 0; width: 18px; height: 18px; pointer-events: none; border: 1px solid #b0aba2; background: linear-gradient(#fff, #e4e4e4); }
.combo i::after { content: ""; position: absolute; left: 6px; top: 7px; border: solid transparent; border-width: 3px 2px 0; border-top-color: #222; }
.in-no { width: 78px; }
.in-name { width: 138px; }
.pager { height: 30px; padding: 0 0 2px 2px; display: flex; align-items: center; white-space: nowrap; }
.pg { height: 22px; display: flex; align-items: center; border-right: 1px solid #b0bcc6; box-shadow: 1px 0 #fff; }
.p1 { width: 87px; gap: 6px; }
.p2 { width: 57px; padding-left: 12px; gap: 13px; }
.p3 { width: 129px; padding-left: 7px; gap: 6px; }
.p4 { width: 58px; padding-left: 15px; gap: 13px; }
.p5 { width: 36px; padding-left: 9px; }
.pager input { height: 20px; text-align: center; background: #cde8cf; border: 1px solid #7f9db9; }
.size { width: 30px; }
.page { width: 24px; }
.sum { padding-left: 6px; }
.grid { width: 100%; table-layout: fixed; border-collapse: separate; border-spacing: 0; border-left: 1px solid #d0d0d0; background: #fff; }
.c1 { width: 70px; } .c2 { width: 189px; } .c3 { width: 249px; } .c4 { width: 130px; } .c5 { width: 249px; }
.grid th, .grid td { padding: 0 0 2px 5px; text-align: left; white-space: nowrap; overflow: hidden; border: solid #dcdcdc; border-width: 0 1px 1px 0; }
.grid th { height: 24px; padding-bottom: 2px; font-weight: normal; border-top: 1px solid #c8c8c8; border-bottom-color: #c8c8c8; background: linear-gradient(#fafafa, #f7f7f7 46%, #eeeff0 47%, #ebebec); }
.grid td { height: 27px; color: #0b66c3; }
.grid .mid { text-align: center; padding-left: 0; }
.grid th.sorted { position: relative; text-align: center; padding-left: 0; background: linear-gradient(#ececec, #d8d8d8); }
.sorted::before { content: ""; position: absolute; left: 31px; top: 0; border: solid transparent; border-width: 4px 4px 0; border-top-color: #808080; }
.grid td.no { text-align: center; padding-left: 0; color: #000; background: #f2f2f2; border-bottom-color: #f2f2f2; }
.grid tr:nth-child(even) td { background: #f7f7f7; }
.grid tr:nth-child(even) td.no { background: #e3e3e3; border-bottom-color: #e3e3e3; }
.grid td.ops { padding-bottom: 0; border-right: 0; }
.ops-row, .ops a { display: flex; align-items: center; flex: none; }
.host { font-weight: bold; margin-right: 8px; }
.turn { margin-right: 7px; }
.more { gap: 2px; }
.splitter { height: 9px; display: flex; justify-content: center; align-items: center; padding-left: 168px; background: linear-gradient(#fff, #e8e8e8); border-bottom: 1px solid #c4c4c4; }
.splitter i { width: 20px; height: 4px; border: solid #a8a8a8; border-width: 1px 0; }
.hscroll { flex: none; height: 18px; display: flex; border: 1px solid #fff; border-right: 0; background: #fff; }
.hscroll .sb-btn { height: 16px; }
.hscroll .sb-thumb { margin: 0 0 0 2px; padding-left: 139px; border-right: 0; background: linear-gradient(#cad8fd, #b6cbfa); }
.floater { position: absolute; right: 0; bottom: 273px; width: 50px; height: 26px; padding-left: 4px; display: flex; align-items: center; gap: 8px; border-radius: 6px 0 0 6px; background: linear-gradient(#f6fcfd, #b9dfe9); box-shadow: 0 1px 3px #888; }

/* footer */
.foot { flex: none; }
.status { height: 20px; display: grid; grid-template-columns: 1fr auto 1fr; align-items: center; padding: 0 5px 2px 23px; white-space: nowrap; color: #45607a; background: linear-gradient(#bcd6e6, #f5fbfd); border-top: 1px solid #7ba0c4; }
.online b { color: #f00; padding: 0 13px; }
.status strong { padding-left: 103px; }
.newmail { text-align: right; }
.ticker { height: 27px; display: flex; align-items: center; padding-left: 4px; gap: 10px; border-top: 1px solid #9b9b9b; background: linear-gradient(#f2f2ef, #e6e6e1); white-space: nowrap; }
.ticker a { color: #0c2f66; text-decoration: underline; border-left: 1px dotted #999; padding-left: 9px; }
.taskbar { height: 8px; padding-top: 2px; display: flex; gap: 2px; background: linear-gradient(#1c52c8, #3b86f0 3px, #2a66dd); }
.start { width: 95px; margin: 2px 8px 0 0; background: #3c9a3c; border-radius: 0 5px 0 0; }
.task { flex: 1; margin-top: 4px; background: #3d86f3; border-radius: 3px 3px 0 0; }
.task-on { background: #1c4ba4; }
.lang { width: 134px; margin: 4px 0 0 55px; background: #fff; }
.tray { width: 100px; margin-left: 20px; background: #17a5ee; }
```
